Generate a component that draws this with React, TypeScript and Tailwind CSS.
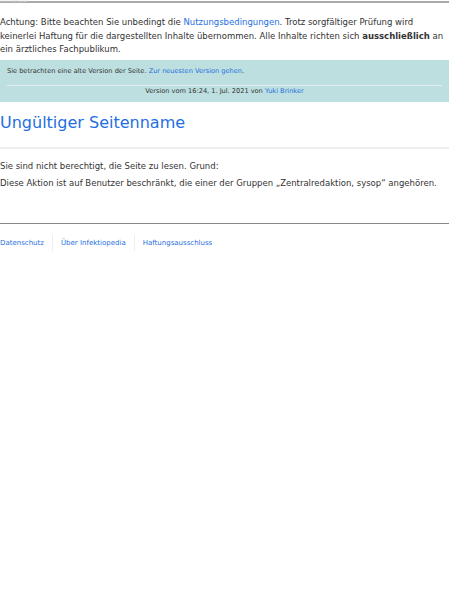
export default function App() {
  const footerLinks = ["Datenschutz", "Über Infektiopedia", "Haftungsausschluss"];

  return (
    <div className="min-h-[599px] bg-white font-['DejaVu_Sans',sans-serif] text-[#333]">
      {/* top bar, cut off */}
      <div className="relative h-[3px] border-b-2 border-[#aaa]">
        <span className="absolute left-0 -top-[5px] text-[7px] text-[#ddd]">Hinweis</span>
      </div>

      <p className="mt-[13px] text-[8.5px] leading-[13.5px]">
        Achtung: Bitte beachten Sie unbedingt die{" "}
        <a className="text-[#1f6fe0]">Nutzungsbedingungen</a>. Trotz sorgfältiger Prüfung wird
        keinerlei Haftung für die dargestellten Inhalte übernommen. Alle Inhalte richten sich{" "}
        <b>ausschließlich</b> an ein ärztliches Fachpublikum.
      </p>

      <div className="mt-[3px] bg-[#bddfdf] px-[7px] pt-[6px] pb-[6px] text-[6.6px]">
        <p className="leading-[10px]">
          Sie betrachten eine alte Version der Seite.{" "}
          <a className="text-[#1f6fe0]">Zur neuesten Version gehen</a>.
        </p>
        <div className="mt-[9px] h-px bg-[#e4eeee]" />
        <p className="mt-px text-center leading-[9px]">
          Version vom 16:24, 1. Jul. 2021 von <a className="text-[#1f6fe0]">Yuki Brinker</a>
        </p>
      </div>

      <h1 className="mt-[9px] text-[16px] leading-[24px] text-[#1f6fe0]">Ungültiger Seitenname</h1>
      <div className="mt-[12px] h-[2px] bg-[#eee]" />

      <div className="mt-[9px] text-[8.5px] leading-[17px]">
        <p>Sie sind nicht berechtigt, die Seite zu lesen. Grund:</p>
        <p>
          Diese Aktion ist auf Benutzer beschränkt, die einer der Gruppen „Zentralredaktion, sysop“
          angehören.
        </p>
      </div>

      <div className="mt-[31px] h-px bg-[#888]" />

      <div className="mt-[11px] flex items-center text-[7px] text-[#1f6fe0]">
        {footerLinks.map((l, i) => (
          <a
            key={l}
            className={
              i === 0
                ? "pr-[8px]"
                : "border-l border-[#eee] px-[8px] py-[3px]"
            }
          >
            {l}
          </a>
        ))}
      </div>
    </div>
  );
}
